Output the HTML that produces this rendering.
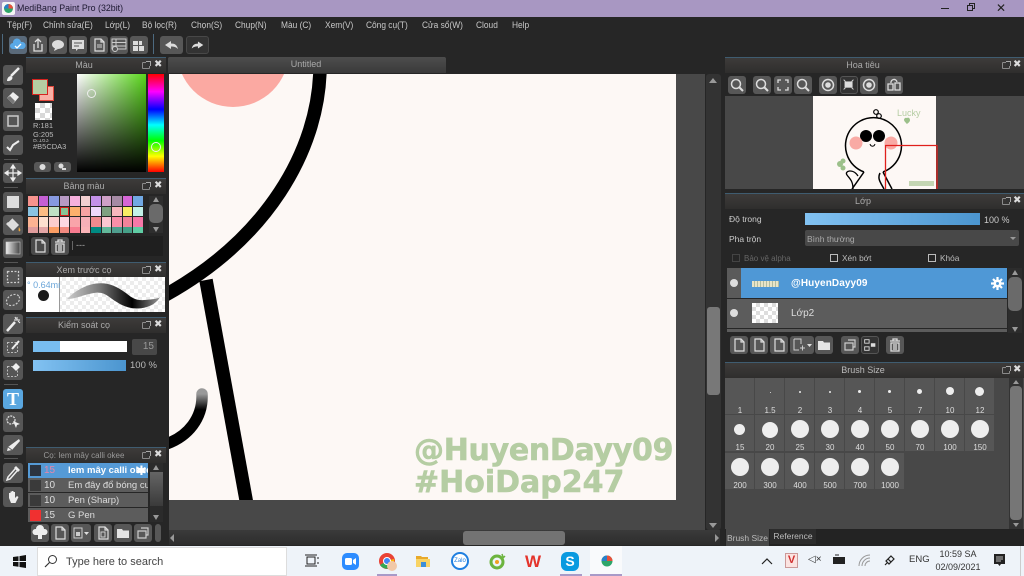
<!DOCTYPE html>
<html><head><meta charset="utf-8"><style>
*{box-sizing:border-box}
html,body{margin:0;padding:0;width:1024px;height:576px;overflow:hidden;background:#262626}
body{position:relative;font-family:"Liberation Sans","DejaVu Sans",sans-serif;font-size:9px;color:#ccc}
div,span,svg{position:absolute}
.t{white-space:nowrap;line-height:12px}
.m{top:18px;font-size:9.5px;color:#c8c8c8;white-space:nowrap;line-height:15px;transform:scaleX(.88);transform-origin:0 0}
.b{background:#575757;border-radius:3px;width:18px;height:18px}
.tl{left:3px;width:20px;height:20px;background:#565656;border-radius:3px}
.b svg,.tl svg{left:0;top:0;width:100%;height:100%}
.h{background:linear-gradient(#3d3b3a,#2f2e2d);border-top:1px solid #3f5c70;height:16px;text-align:center;color:#aaa;font-size:9px;line-height:15px}
.hl{padding-right:24px}
.hr{padding-right:23px}
.pi{width:8px;height:7px;border:1px solid #8a8a8a;border-radius:1px}
.pi::after{content:"";position:absolute;right:-2px;top:-2px;width:4px;height:4px;background:#333;border-top:1px solid #aaa;border-right:1px solid #aaa}
.x{top:0;color:#ddd;font-size:10px;font-weight:bold;line-height:14px}
.sw{width:9.5px;height:9.5px}
.c{width:29px;background:#565656;height:36px}
.d{background:#eee;border-radius:50%}
.n{width:30px;text-align:center;color:#ddd;font-size:8px;line-height:10px;white-space:nowrap}
.s{left:4px;width:14px;height:1px;background:#555}
.r{left:28px;width:120px;height:14px;background:#5c5c5c;color:#ddd;font-size:9.5px;line-height:14px;white-space:nowrap;overflow:hidden}
.wm{font-family:"DejaVu Sans",sans-serif;font-size:30px;line-height:38px;font-weight:bold;color:#b5cda3;-webkit-text-stroke:.6px #b5cda3}
</style></head><body>
<svg width="0" height="0" style="position:absolute"><defs>
<symbol id="page" viewBox="0 0 18 18"><path d="M5 3h6l3 3v9H5zM11 3v3h3" fill="none" stroke="#ddd" stroke-width="1.2"/></symbol>
<symbol id="trash" viewBox="0 0 18 18"><path d="M4 5h10M7 5V3h4v2M5 7h8v8H5zM8 8v6M10 8v6" fill="none" stroke="#ddd" stroke-width="1.3"/></symbol>
<symbol id="copy" viewBox="0 0 18 18"><path d="M7 4h7v7h-2M4 7h8v7H4z" fill="none" stroke="#ccc" stroke-width="1.2"/></symbol>
<symbol id="folder" viewBox="0 0 18 18"><path d="M3 5h5l1 1.500h6V14H3z" fill="#e4e4e4"/></symbol>
<symbol id="mag" viewBox="0 0 18 18"><circle cx="8" cy="8" r="4.500" fill="none" stroke="#ddd" stroke-width="1.500"/><path d="M11 11l4 4" stroke="#ddd" stroke-width="2"/></symbol>
<symbol id="rot" viewBox="0 0 18 18"><circle cx="9" cy="9" r="5.500" fill="none" stroke="#ddd" stroke-width="1.500"/><circle cx="9" cy="9" r="2.800" fill="#ddd"/></symbol>
</defs></svg>

<!-- title bar -->
<div style="left:0;top:0;width:1024px;height:17px;background:#a897c2"></div>
<svg style="left:2px;top:2px" width="13" height="13" viewBox="0 0 13 13"><rect width="13" height="13" rx="2" fill="#f5f5f5"/><circle cx="6.500" cy="6.500" r="4.500" fill="#2fa56a"/><path d="M6.500 2a4.500 4.500 0 0 1 4.500 4.500H6.500z" fill="#e8503a"/><path d="M2 6.500a4.500 4.500 0 0 1 4.500-4.500v4.500z" fill="#2a7fc8"/></svg>
<div class="t" style="left:17px;top:2px;font-size:9.5px;color:#1c1830;line-height:13px;transform:scaleX(.93);transform-origin:0 0">MediBang Paint Pro (32bit)</div>
<div style="left:941px;top:8px;width:8px;height:1px;background:#222"></div>
<div style="left:969px;top:3px;width:6px;height:6px;border:1px solid #222"></div>
<div style="left:967px;top:5px;width:6px;height:6px;border:1px solid #222;background:#a897c2"></div>
<div class="t" style="left:996px;top:2px;font-size:12px;color:#222">✕</div>

<!-- menu -->
<div class="m" style="left:7px">Tệp(F)</div>
<div class="m" style="left:43px">Chỉnh sửa(E)</div>
<div class="m" style="left:105px">Lớp(L)</div>
<div class="m" style="left:142px">Bộ lọc(R)</div>
<div class="m" style="left:191px">Chọn(S)</div>
<div class="m" style="left:235px">Chụp(N)</div>
<div class="m" style="left:281px">Màu (C)</div>
<div class="m" style="left:325px">Xem(V)</div>
<div class="m" style="left:366px">Công cụ(T)</div>
<div class="m" style="left:422px">Cửa sổ(W)</div>
<div class="m" style="left:476px">Cloud</div>
<div class="m" style="left:512px">Help</div>

<!-- toolbar -->
<div style="left:2px;top:34px;width:1px;height:20px;background:#4d6a80"></div>
<div class="b" style="left:9px;top:36px;background:#5a6a7a"><svg viewBox="0 0 18 18"><path d="M4 13a3 3 0 0 1 0-6 4 4 0 0 1 8-1 3.500 3.500 0 0 1 2 7z" fill="#5aa9e6"/><path d="M6 10l2 2 4-4" stroke="#fff" stroke-width="1.300" fill="none"/></svg></div>
<div class="b" style="left:29px;top:36px"><svg viewBox="0 0 18 18"><path d="M5 8v7h8V8M9 12V3M6 6l3-3 3 3" fill="none" stroke="#ddd" stroke-width="1.300"/></svg></div>
<div class="b" style="left:49px;top:36px"><svg viewBox="0 0 18 18"><ellipse cx="9" cy="8.500" rx="6" ry="4.500" fill="#ddd"/><path d="M6 12l-1 3 4-2z" fill="#ddd"/></svg></div>
<div class="b" style="left:69px;top:36px"><svg viewBox="0 0 18 18"><path d="M3 4h12v9H9l-2 2v-2H3z" fill="#ddd"/><path d="M5 7h8M5 10h5" stroke="#555"/></svg></div>
<div class="b" style="left:90px;top:36px"><svg><use href="#page"/></svg><svg viewBox="0 0 18 18"><path d="M7 9h5M7 11h5" stroke="#ccc"/></svg></div>
<div class="b" style="left:110px;top:36px"><svg viewBox="0 0 18 18"><path d="M2 3h14v10H2zM2 6.500h14M2 10h14M6 3v10" fill="none" stroke="#ccc"/><circle cx="5" cy="13" r="2.500" fill="#555" stroke="#ccc"/></svg></div>
<div class="b" style="left:130px;top:36px"><svg viewBox="0 0 18 18"><path d="M3 5h5v4H3zM9 5h3v4H9zM3 10h5v5H3zM9 10h5v5H9z" fill="#ddd"/></svg></div>
<div style="left:153px;top:34px;width:1px;height:20px;background:#4d6a80"></div>
<div class="b" style="left:160px;top:36px;width:23px"><svg viewBox="0 0 23 18"><path d="M11 5L5 9l6 4v-2.500c3 0 5 .5 7 2.500-1-4-3-5.500-7-5.500z" fill="#ddd"/></svg></div>
<div class="b" style="left:186px;top:36px;width:23px;background:#333;border:1px solid #484848"><svg viewBox="0 0 23 18"><path d="M12 5l6 4-6 4v-2.500c-3 0-5 .5-7 2.500 1-4 3-5.500 7-5.500z" fill="#ddd"/></svg></div>

<!-- left tools -->
<div class="tl" style="top:65px"><svg viewBox="0 0 20 20"><path d="M16 3L8 11" stroke="#eee" stroke-width="2.500"/><path d="M4 16c0-3 2-5 4-5l1.500 1.500c0 2-2 4-5.500 3.500z" fill="#eee"/></svg></div>
<div class="tl" style="top:88px"><svg viewBox="0 0 20 20"><path d="M10 4l6 5-6 7-6-6z" fill="#eee"/><path d="M7 8l5 5-2 3-6-6z" fill="#777"/></svg></div>
<div class="tl" style="top:111px"><svg viewBox="0 0 20 20"><rect x="5" y="5" width="10" height="10" fill="none" stroke="#ccc" stroke-width="1.500"/></svg></div>
<div class="tl" style="top:135px"><svg viewBox="0 0 20 20"><path d="M4 12l3 3 3-5 6-4" fill="none" stroke="#eee" stroke-width="2"/></svg></div>
<div class="s" style="top:159px"></div>
<div class="tl" style="top:163px"><svg viewBox="0 0 20 20"><path d="M10 3v14M3 10h14M10 2l-2 3h4zM10 18l-2-3h4zM2 10l3-2v4zM18 10l-3-2v4z" stroke="#eee" fill="#eee" stroke-width="1.200"/></svg></div>
<div class="s" style="top:187px"></div>
<div class="tl" style="top:192px"><svg viewBox="0 0 20 20"><rect x="4" y="4" width="12" height="12" fill="#ddd"/></svg></div>
<div class="tl" style="top:215px"><svg viewBox="0 0 20 20"><path d="M9 3l7 7-6 6-7-7z" fill="#ddd"/><path d="M5 7l4-4" stroke="#555"/><path d="M16 12c1 2 2 3 1 4s-2 0-1-4z" fill="#e9a33a"/></svg></div>
<div class="tl" style="top:238px"><svg viewBox="0 0 20 20"><defs><linearGradient id="g1"><stop offset="0" stop-color="#eee"/><stop offset="1" stop-color="#444"/></linearGradient></defs><rect x="3" y="4" width="14" height="12" fill="url(#g1)" stroke="#ccc" stroke-width=".6"/></svg></div>
<div class="s" style="top:262px"></div>
<div class="tl" style="top:267px"><svg viewBox="0 0 20 20"><rect x="4.500" y="4.500" width="11" height="11" fill="none" stroke="#ccc" stroke-width="1.300" stroke-dasharray="2 1.500"/></svg></div>
<div class="tl" style="top:290px"><svg viewBox="0 0 20 20"><ellipse cx="10" cy="10" rx="7" ry="5" transform="rotate(-30 10 10)" fill="none" stroke="#ccc" stroke-width="1.200" stroke-dasharray="2 1.500"/></svg></div>
<div class="tl" style="top:314px"><svg viewBox="0 0 20 20"><path d="M4 17L12 8" stroke="#eee" stroke-width="2.500"/><path d="M14 3v3M11 6h6M17 9l-2-2M12 3l1 2" stroke="#eee"/></svg></div>
<div class="tl" style="top:337px"><svg viewBox="0 0 20 20"><rect x="4.500" y="5.500" width="10" height="10" fill="none" stroke="#bbb" stroke-dasharray="2 1.500"/><path d="M9 12L16 4" stroke="#eee" stroke-width="2"/></svg></div>
<div class="tl" style="top:360px"><svg viewBox="0 0 20 20"><rect x="4.500" y="6.500" width="10" height="10" fill="none" stroke="#bbb" stroke-dasharray="2 1.500"/><path d="M9 7l4-4 4 4-4 4z" fill="#eee"/></svg></div>
<div class="s" style="top:384px"></div>
<div class="tl" style="top:389px;background:#5aa7e0;color:#fff;font:bold 18px/20px 'Liberation Serif',serif;text-align:center">T</div>
<div class="tl" style="top:412px"><svg viewBox="0 0 20 20"><circle cx="8" cy="8" r="4" fill="none" stroke="#ddd" stroke-width="1.300" stroke-dasharray="2 1"/><path d="M10 9l7 3-3 1-1 3z" fill="#eee"/></svg></div>
<div class="tl" style="top:435px"><svg viewBox="0 0 20 20"><path d="M16 4l1 2-8 9-5 1 1-4z" fill="#eee"/><path d="M5 12l4 3" stroke="#666"/></svg></div>
<div class="s" style="top:458px"></div>
<div class="tl" style="top:463px"><svg viewBox="0 0 20 20"><path d="M12 6L5 14l-1 3 3-1 7-8" fill="none" stroke="#eee" stroke-width="1.500"/><path d="M11 5l2-2 4 4-2 2z" fill="#eee"/></svg></div>
<div class="tl" style="top:487px"><svg viewBox="0 0 20 20"><path d="M6 11V6h1.500v4V4.500H9V10V4h1.500v6V5H12v6l2-2 1.500 1-3 6H8z" fill="#eee"/></svg></div>

<!-- color panel -->
<div class="h hl" style="left:26px;top:57px;width:140px">Màu</div>
<div class="pi" style="left:142px;top:62px"></div><div class="x" style="left:154px;top:58px">✖</div>
<div style="left:39px;top:86px;width:15px;height:15px;background:#f9b0a5;border:1px solid #e2483c"></div>
<div style="left:32px;top:79px;width:16px;height:16px;background:#b5cda3;border:1.500px solid #d62420"></div>
<div style="left:35px;top:103px;width:17px;height:17px;background:repeating-conic-gradient(#d8d8d8 0 25%,#fff 0 50%) 0 0/10px 10px"></div>
<div class="t" style="left:33px;top:121px;font-size:7.500px;line-height:9px;color:#bbb">R:181<br>G:205</div>
<div class="t" style="left:33px;top:139px;font-size:6px;line-height:5px;color:#aaa;height:4px;overflow:hidden">B:163</div>
<div class="t" style="left:33px;top:142px;font-size:7.500px;line-height:9px;color:#bbb">#B5CDA3</div>
<div class="b" style="left:34px;top:162px;width:17px;height:10px"><svg viewBox="0 0 17 10"><circle cx="8.500" cy="5" r="3" fill="#ddd"/></svg></div>
<div class="b" style="left:54px;top:162px;width:17px;height:10px"><svg viewBox="0 0 17 10"><circle cx="7" cy="4" r="2.500" fill="#ddd"/><path d="M8 6h4v2H8z" fill="#ddd"/></svg></div>
<div style="left:77px;top:74px;width:69px;height:98px;background:linear-gradient(transparent,#000),linear-gradient(90deg,#fff,#59d61b)"></div>
<div style="left:87px;top:89px;width:9px;height:9px;border:1.200px solid #eee;border-radius:50%"></div>
<div style="left:148px;top:74px;width:16px;height:98px;background:linear-gradient(#f00 0%,#f0f 18%,#00f 36%,#0ff 52%,#0f0 68%,#ff0 84%,#f00 100%)"></div>
<div style="left:151px;top:142px;width:10px;height:10px;border:1.300px solid #eee;border-radius:50%"></div>

<!-- palette panel -->
<div class="h hl" style="left:26px;top:178px;width:140px">Bảng màu</div>
<div class="pi" style="left:142px;top:183px"></div><div class="x" style="left:154px;top:179px">✖</div>
<div class="sw" style="left:28px;top:196px;background:#f7938d"></div><div class="sw" style="left:38.500px;top:196px;background:#c45fd3"></div><div class="sw" style="left:49px;top:196px;background:#8799e0"></div><div class="sw" style="left:59.500px;top:196px;background:#b89ac4"></div><div class="sw" style="left:70px;top:196px;background:#f6b0dc"></div><div class="sw" style="left:80.500px;top:196px;background:#f2cfd0"></div><div class="sw" style="left:91px;top:196px;background:#c391e8"></div><div class="sw" style="left:101.500px;top:196px;background:#cfa0c6"></div><div class="sw" style="left:112px;top:196px;background:#a58aa4"></div><div class="sw" style="left:122.500px;top:196px;background:#d666d6"></div><div class="sw" style="left:133px;top:196px;background:#71a9e4"></div>
<div class="sw" style="left:28px;top:206.500px;background:#89c4e2"></div><div class="sw" style="left:38.500px;top:206.500px;background:#fbbd84"></div><div class="sw" style="left:49px;top:206.500px;background:#bfe0c4"></div><div class="sw" style="left:59.500px;top:206.500px;background:#88c596;border:1px solid #d8201c"></div><div class="sw" style="left:70px;top:206.500px;background:#fdb06c"></div><div class="sw" style="left:80.500px;top:206.500px;background:#f7a3a3"></div><div class="sw" style="left:91px;top:206.500px;background:#eed8fa"></div><div class="sw" style="left:101.500px;top:206.500px;background:#7fa181"></div><div class="sw" style="left:112px;top:206.500px;background:#f7b7bd"></div><div class="sw" style="left:122.500px;top:206.500px;background:#f9ee64"></div><div class="sw" style="left:133px;top:206.500px;background:#c2f2e8"></div>
<div class="sw" style="left:28px;top:217px;background:#fcb392"></div><div class="sw" style="left:38.500px;top:217px;background:#fde0cf"></div><div class="sw" style="left:49px;top:217px;background:#fbcdcd"></div><div class="sw" style="left:59.500px;top:217px;background:#fcd8e2"></div><div class="sw" style="left:70px;top:217px;background:#f9a4aa"></div><div class="sw" style="left:80.500px;top:217px;background:#f7b0b8"></div><div class="sw" style="left:91px;top:217px;background:#ee8a8e"></div><div class="sw" style="left:101.500px;top:217px;background:#fbc6d0"></div><div class="sw" style="left:112px;top:217px;background:#f98ea8"></div><div class="sw" style="left:122.500px;top:217px;background:#f4829a"></div><div class="sw" style="left:133px;top:217px;background:#f678a8"></div>
<div class="sw" style="left:28px;top:227px;height:6px;background:#e09c9c"></div><div class="sw" style="left:38.500px;top:227px;height:6px;background:#e4a6a6"></div><div class="sw" style="left:49px;top:227px;height:6px;background:#fb9e64"></div><div class="sw" style="left:59.500px;top:227px;height:6px;background:#f28a80"></div><div class="sw" style="left:70px;top:227px;height:6px;background:#f87c90"></div><div class="sw" style="left:80.500px;top:227px;height:6px;background:#fbb4b8"></div><div class="sw" style="left:91px;top:227px;height:6px;background:#008a82"></div><div class="sw" style="left:101.500px;top:227px;height:6px;background:#62b89a"></div><div class="sw" style="left:112px;top:227px;height:6px;background:#4f9e8e"></div><div class="sw" style="left:122.500px;top:227px;height:6px;background:#46a088"></div><div class="sw" style="left:133px;top:227px;height:6px;background:#5fcca4"></div>
<div style="left:149px;top:196px;width:14px;height:37px;background:#2e2e2e"></div>
<div style="left:149px;top:204px;width:14px;height:19px;background:#6a6a6a;border-radius:5px"></div>
<div style="left:153px;top:197px;border:3.500px solid transparent;border-bottom:5px solid #999;border-top:0"></div>
<div style="left:153px;top:227px;border:3.500px solid transparent;border-top:5px solid #999;border-bottom:0"></div>
<div style="left:29px;top:236px;width:134px;height:20px;background:#1f1f1f"></div>
<div class="b" style="left:31px;top:237px;background:#4a4a4a"><svg><use href="#page"/></svg></div>
<div class="b" style="left:51px;top:237px;background:#4f4f4f"><svg><use href="#trash"/></svg></div>
<div style="left:72px;top:241px;width:1px;height:9px;background:#666"></div>
<div class="t" style="left:76px;top:239px;font-size:9px;color:#aaa">---</div>

<!-- brush preview -->
<div class="h hl" style="left:26px;top:262px;width:140px">Xem trước cọ</div>
<div class="pi" style="left:142px;top:267px"></div><div class="x" style="left:154px;top:263px">✖</div>
<div style="left:26px;top:277px;width:139px;height:35px;background:repeating-conic-gradient(#ececec 0 25%,#fff 0 50%) 0 0/8px 8px"></div>
<div style="left:26px;top:277px;width:34px;height:35px;background:#fff;border-right:1px solid #999"></div>
<div class="t" style="left:27px;top:279px;width:33px;overflow:hidden;font-size:9px;color:#6aa5d8">° 0.64mm</div>
<div style="left:38px;top:290px;width:11px;height:11px;background:#1a1a1a;border-radius:50%"></div>
<svg style="left:60px;top:277px" width="105" height="35" viewBox="0 0 105 35"><defs><linearGradient id="g2"><stop offset="0" stop-color="#ccc"/><stop offset=".35" stop-color="#777"/><stop offset=".7" stop-color="#000"/><stop offset="1" stop-color="#999"/></linearGradient></defs><path d="M7 22C20 9 38 2 54 9S70 24 84 23 98 21 100 20C94 31 76 35 62 28S46 14 34 16 16 22 7 22z" fill="url(#g2)"/></svg>

<!-- brush control -->
<div class="h hl" style="left:26px;top:317px;width:140px">Kiểm soát cọ</div>
<div class="pi" style="left:142px;top:322px"></div><div class="x" style="left:154px;top:318px">✖</div>
<div style="left:33px;top:341px;width:94px;height:11px;background:#fff"></div>
<div style="left:33px;top:341px;width:27px;height:11px;background:#78bdf0"></div>
<div style="left:132px;top:339px;width:25px;height:16px;background:#484848;border-radius:2px;color:#999;font-size:10px;line-height:16px;text-align:right;padding-right:3px">15</div>
<div style="left:33px;top:360px;width:93px;height:11px;background:linear-gradient(90deg,#82c2f2,#4b95cf)"></div>
<div class="t" style="left:130px;top:360px;color:#bbb;font-size:9.500px">100 %</div>

<!-- brush list -->
<div class="h hl" style="left:26px;top:447px;width:140px;color:#999;font-size:8px">Cọ: Iem mây calli okee</div>
<div class="pi" style="left:142px;top:452px"></div><div class="x" style="left:154px;top:448px">✖</div>
<div class="r" style="top:463px;height:15px;background:#559ad6;color:#fff;font-weight:bold"></div>
<div class="r" style="top:478px"></div><div class="r" style="top:493px"></div><div class="r" style="top:508px"></div>
<div style="left:30px;top:465px;width:11px;height:11px;background:#2c3440"></div>
<div style="left:30px;top:480px;width:11px;height:11px;background:#3a3a3a"></div>
<div style="left:30px;top:495px;width:11px;height:11px;background:#3a3a3a"></div>
<div style="left:30px;top:510px;width:11px;height:11px;background:#f03030"></div>
<div class="t" style="left:44px;top:465px;font-size:10px;color:#e886a8">15</div>
<div class="t" style="left:44px;top:480px;font-size:10px;color:#ddd">10</div>
<div class="t" style="left:44px;top:495px;font-size:10px;color:#ddd">10</div>
<div class="t" style="left:44px;top:510px;font-size:10px;color:#ddd">15</div>
<div class="t" style="left:68px;top:465px;width:80px;overflow:hidden;font-size:9.500px;font-weight:bold;color:#fff">Iem mây calli okee</div>
<div class="t" style="left:68px;top:480px;width:80px;overflow:hidden;font-size:9.500px;color:#ddd">Em đây đổ bóng cute</div>
<div class="t" style="left:68px;top:495px;font-size:9.500px;color:#ddd">Pen (Sharp)</div>
<div class="t" style="left:68px;top:510px;font-size:9.500px;color:#ddd">G Pen</div>
<div style="left:136px;top:464px;width:12px;height:13px;color:#fff;font-size:13px;line-height:13px">✱</div>
<div style="left:150px;top:463px;width:13px;height:59px;background:#2b2b2b"></div>
<div style="left:150px;top:472px;width:13px;height:34px;background:linear-gradient(#656565,#3a3a3a)"></div>
<div style="left:153px;top:465px;border:3.500px solid transparent;border-bottom:5px solid #999;border-top:0"></div>
<div style="left:153px;top:515px;border:3.500px solid transparent;border-top:5px solid #999;border-bottom:0"></div>
<div class="b" style="left:31px;top:524px"><svg viewBox="0 0 18 18"><path d="M4 11a3 3 0 0 1 1-6 4 4 0 0 1 8 0 3 3 0 0 1 1 6h-3v4H7v-4z" fill="#eee"/></svg></div>
<div class="b" style="left:51px;top:524px"><svg><use href="#page"/></svg></div>
<div class="b" style="left:71px;top:524px;width:20px"><svg viewBox="0 0 20 18"><path d="M3 4h8v10H3z" fill="none" stroke="#ccc"/><path d="M5 8h4v4H5z" fill="#ccc"/><path d="M13 8h5l-2.500 3z" fill="#ddd"/></svg></div>
<div class="b" style="left:94px;top:524px"><svg><use href="#page"/></svg><svg viewBox="0 0 18 18"><rect x="7" y="8" width="4" height="5" fill="none" stroke="#ccc"/></svg></div>
<div class="b" style="left:114px;top:524px"><svg><use href="#folder"/></svg></div>
<div class="b" style="left:134px;top:524px"><svg><use href="#copy"/></svg></div>
<div class="b" style="left:155px;top:524px;width:6px"></div>

<!-- canvas -->
<div style="left:168px;top:55px;width:552px;height:19px;background:#262626"></div>
<div style="left:168px;top:57px;width:278px;height:16px;background:linear-gradient(#4d4d4d,#3a3a3a);border-radius:2px 2px 0 0;color:#aaa;font-size:9px;line-height:15px;text-align:center;padding-right:2px">Untitled</div>
<div style="left:169px;top:74px;width:536px;height:456px;background:#484848"></div>
<div style="left:169px;top:74px;width:507px;height:426px;background:#fdf8f5;overflow:hidden">
<svg style="left:0;top:0" width="507" height="426" viewBox="169 74 507 426">
<defs><linearGradient id="g3" x1="0" y1="1" x2="0" y2="0"><stop offset=".7" stop-color="#000"/><stop offset="1" stop-color="#999"/></linearGradient></defs>
<circle cx="233" cy="51" r="56" fill="#fba9a2"/>
<path d="M320 70C318 150 268 240 160 298" fill="none" stroke="#000" stroke-width="13.500"/>
<path d="M206 280L247 505" fill="none" stroke="#000" stroke-width="13.500"/>
<path d="M202 394C203 416 190 438 160 446" fill="none" stroke="url(#g3)" stroke-width="11.500" stroke-linecap="round"/>
</svg>
<div class="t wm" style="left:245px;top:358px;letter-spacing:-.3px">@HuyenDayy09</div>
<div class="t wm" style="left:245px;top:390px">#HoiDap247</div>
</div>
<div style="left:706px;top:74px;width:15px;height:456px;background:#333;border-radius:3px"></div>
<div style="left:707px;top:307px;width:13px;height:88px;background:#787878;border-radius:3px"></div>
<div style="left:709px;top:78px;border:4px solid transparent;border-bottom:5px solid #999;border-top:0"></div>
<div style="left:709px;top:523px;border:4px solid transparent;border-top:5px solid #999;border-bottom:0"></div>
<div style="left:169px;top:530px;width:551px;height:15px;background:linear-gradient(#3a3a3a,#2d2d2d)"></div>
<div style="left:463px;top:531px;width:102px;height:14px;background:#737373;border-radius:3px"></div>
<div style="left:170px;top:534px;border:4px solid transparent;border-right:4px solid #999;border-left:0"></div>
<div style="left:715px;top:534px;border:4px solid transparent;border-left:4px solid #999;border-right:0"></div>

<!-- navigator -->
<div class="h hr" style="left:725px;top:57px;width:299px">Hoa tiêu</div>
<div class="pi" style="left:1002px;top:62px"></div><div class="x" style="left:1013px;top:58px">✖</div>
<div style="left:725px;top:73px;width:299px;height:23px;background:#262626"></div>
<div class="b" style="left:728px;top:76px"><svg><use href="#mag"/></svg></div>
<div class="b" style="left:753px;top:76px"><svg><use href="#mag"/></svg></div>
<div class="b" style="left:774px;top:76px"><svg viewBox="0 0 18 18"><path d="M4 7V4h3M11 4h3v3M14 11v3h-3M7 14H4v-3" fill="none" stroke="#ddd" stroke-width="1.300"/></svg></div>
<div class="b" style="left:794px;top:76px"><svg><use href="#mag"/></svg></div>
<div class="b" style="left:819px;top:76px"><svg><use href="#rot"/></svg></div>
<div class="b" style="left:840px;top:76px;background:#333;border:1px solid #555"><svg viewBox="0 0 18 18"><rect x="4" y="5" width="9" height="7" fill="#ddd"/><path d="M3 3l2 2M14 3l-2 2M3 14l2-2M14 14l-2-2" stroke="#ddd"/></svg></div>
<div class="b" style="left:860px;top:76px"><svg><use href="#rot"/></svg></div>
<div class="b" style="left:885px;top:76px"><svg viewBox="0 0 18 18"><path d="M3 8h5v6H3zM10 7h5v7h-5zM6 7a3 3 0 0 1 6-1" fill="none" stroke="#ddd" stroke-width="1.300"/></svg></div>
<div style="left:725px;top:96px;width:299px;height:93px;background:#484848"></div>
<div style="left:813px;top:96px;width:123px;height:93px;background:#fdf8f5"></div>
<svg style="left:813px;top:96px" width="125" height="93" viewBox="813 96 125 93">
<circle cx="876" cy="112" r="2.300" fill="none" stroke="#000" stroke-width="1.200"/><circle cx="879" cy="116" r="2.300" fill="none" stroke="#000" stroke-width="1.200"/>
<path d="M864 172A28 28 0 1 1 883 172" fill="none" stroke="#000" stroke-width="1.500"/>
<path d="M864 172L852 189M883 172L892 189M880 173C877 179 881 183 884 189" fill="none" stroke="#000" stroke-width="1.500"/>
<path d="M858 176C853 168 844 171 847 175S853 181 853 189" fill="none" stroke="#000" stroke-width="1.300"/>
<circle cx="866" cy="136" r="6" fill="#000"/><circle cx="879" cy="136" r="6" fill="#000"/>
<circle cx="856" cy="143" r="6.500" fill="#f9aaa4"/><circle cx="891" cy="143" r="6.500" fill="#f9aaa4"/>
<path d="M870 144c1 3 4 3 5 0" fill="none" stroke="#000"/>
<circle cx="840" cy="164" r="3" fill="#9cc08a"/><circle cx="843" cy="161" r="2.500" fill="#9cc08a"/><circle cx="843" cy="168" r="2.500" fill="#9cc08a"/>
<text x="897" y="116" font-size="9" font-family="Liberation Sans" fill="#b5cda3">Lucky</text>
<path d="M907 118c-2-1-3 1-3 2s2 3 3 4c1-1 3-2 3-4s-2-3-3-2z" fill="#9cc08a"/>
<rect x="909" y="181" width="25" height="5" fill="#b5cda3" opacity=".8"/>
<path d="M885.500 189V145.500H937V189" fill="none" stroke="#e0201c" stroke-width="1.300"/>
</svg>

<!-- layer panel -->
<div style="left:725px;top:189px;width:299px;height:5px;background:#262626"></div>
<div class="h hr" style="left:725px;top:193px;width:299px">Lớp</div>
<div class="pi" style="left:1002px;top:198px"></div><div class="x" style="left:1013px;top:194px">✖</div>
<div style="left:725px;top:209px;width:299px;height:152px;background:#262626"></div>
<div class="t" style="left:729px;top:213px;font-size:8.500px;color:#ccc">Độ trong</div>
<div style="left:805px;top:213px;width:175px;height:12px;background:linear-gradient(90deg,#82c2f2,#4b95cf)"></div>
<div class="t" style="left:984px;top:214px;font-size:9px;color:#ccc">100 %</div>
<div class="t" style="left:729px;top:233px;font-size:8.500px;color:#ccc">Pha trộn</div>
<div style="left:805px;top:230px;width:214px;height:16px;background:#484848;border-radius:2px;color:#aaa;font-size:8.500px;line-height:18px;padding-left:2px">Bình thường</div>
<div style="left:1010px;top:237px;border:3px solid transparent;border-top:3px solid #999;border-bottom:0"></div>
<div style="left:732px;top:254px;width:8px;height:8px;border:1px solid #444"></div>
<div class="t" style="left:744px;top:253px;font-size:8px;color:#666">Bảo vệ alpha</div>
<div style="left:830px;top:254px;width:8px;height:8px;border:1px solid #bbb"></div>
<div class="t" style="left:842px;top:252px;font-size:8.300px;color:#bbb">Xén bớt</div>
<div style="left:928px;top:254px;width:8px;height:8px;border:1px solid #bbb"></div>
<div class="t" style="left:940px;top:252px;font-size:8.300px;color:#bbb">Khóa</div>
<div style="left:727px;top:268px;width:280px;height:30px;background:#4f98d6"></div>
<div style="left:727px;top:268px;width:14px;height:30px;background:#5a5a5a"></div>
<div style="left:727px;top:299px;width:280px;height:29px;background:#5c5c5c"></div>
<div style="left:727px;top:329px;width:280px;height:3px;background:#5c5c5c"></div>
<div style="left:730px;top:279px;width:8px;height:8px;background:#ddd;border-radius:50%"></div>
<div style="left:730px;top:309px;width:8px;height:8px;background:#ddd;border-radius:50%"></div>
<div style="left:752px;top:281px;width:27px;height:6px;background:repeating-linear-gradient(90deg,#e8e4c8 0 2px,#b0bca0 2px 3px)"></div>
<div style="left:752px;top:303px;width:26px;height:20px;background:repeating-conic-gradient(#ddd 0 25%,#fff 0 50%) 0 0/8px 8px"></div>
<div class="t" style="left:791px;top:277px;font-size:10px;font-weight:bold;color:#fff;letter-spacing:.1px;line-height:14px">@HuyenDayy09</div>
<div class="t" style="left:791px;top:307px;font-size:10px;color:#ddd;line-height:14px">Lớp2</div>
<svg style="left:990px;top:276px" width="15" height="15" viewBox="0 0 15 15"><path d="M7.500 1v13M1 7.500h13M3 3l9 9M12 3l-9 9" stroke="#fff" stroke-width="2.200"/><circle cx="7.500" cy="7.500" r="4" fill="#fff"/><circle cx="7.500" cy="7.500" r="1.500" fill="#4f98d6"/></svg>
<div style="left:1008px;top:268px;width:14px;height:65px;background:#2c2c2c"></div>
<div style="left:1008px;top:277px;width:14px;height:34px;background:#6a6a6a;border-radius:5px"></div>
<div style="left:1012px;top:270px;border:3px solid transparent;border-bottom:5px solid #999;border-top:0"></div>
<div style="left:1012px;top:327px;border:3px solid transparent;border-top:5px solid #999;border-bottom:0"></div>
<div class="b" style="left:730px;top:336px"><svg><use href="#page"/></svg></div>
<div class="b" style="left:750px;top:336px"><svg><use href="#page"/></svg></div>
<div class="b" style="left:770px;top:336px"><svg><use href="#page"/></svg></div>
<div class="b" style="left:790px;top:336px;width:24px"><svg viewBox="0 0 24 18"><path d="M4 3h7v5M4 3v11h5M10 12h5M12.500 9.500v5" fill="none" stroke="#ccc"/><path d="M17 8h5l-2.500 3z" fill="#ddd"/></svg></div>
<div class="b" style="left:815px;top:336px"><svg><use href="#folder"/></svg></div>
<div class="b" style="left:841px;top:336px"><svg><use href="#copy"/></svg></div>
<div class="b" style="left:861px;top:336px;background:#333;border:1px solid #555"><svg viewBox="0 0 18 18"><path d="M3 3h5v4H3zM3 11h5v4H3z" fill="none" stroke="#ddd"/><rect x="10" y="7" width="5" height="4" fill="#ddd"/></svg></div>
<div class="b" style="left:886px;top:336px"><svg><use href="#trash"/></svg></div>

<!-- brush size -->
<div class="h hr" style="left:725px;top:362px;width:299px;color:#bbb">Brush Size</div>
<div class="pi" style="left:1002px;top:367px"></div><div class="x" style="left:1013px;top:363px">✖</div>
<div style="left:725px;top:378px;width:299px;height:151px;background:#484848"></div>

<div class="c" style="left:725px;top:378px"></div><div class="c" style="left:755px;top:378px"></div><div class="c" style="left:785px;top:378px"></div><div class="c" style="left:815px;top:378px"></div><div class="c" style="left:845px;top:378px"></div><div class="c" style="left:875px;top:378px"></div><div class="c" style="left:905px;top:378px"></div><div class="c" style="left:935px;top:378px"></div><div class="c" style="left:965px;top:378px"></div>
<div class="c" style="left:725px;top:415px"></div><div class="c" style="left:755px;top:415px"></div><div class="c" style="left:785px;top:415px"></div><div class="c" style="left:815px;top:415px"></div><div class="c" style="left:845px;top:415px"></div><div class="c" style="left:875px;top:415px"></div><div class="c" style="left:905px;top:415px"></div><div class="c" style="left:935px;top:415px"></div><div class="c" style="left:965px;top:415px"></div>
<div class="c" style="left:725px;top:453px"></div><div class="c" style="left:755px;top:453px"></div><div class="c" style="left:785px;top:453px"></div><div class="c" style="left:815px;top:453px"></div><div class="c" style="left:845px;top:453px"></div><div class="c" style="left:875px;top:453px"></div>

<div class="d" style="left:770px;top:392px;width:1px;height:1px"></div>
<div class="d" style="left:799px;top:391px;width:2px;height:2px"></div>
<div class="d" style="left:829px;top:391px;width:2px;height:2px"></div>
<div class="d" style="left:858px;top:390px;width:3px;height:3px"></div>
<div class="d" style="left:888px;top:390px;width:3px;height:3px"></div>
<div class="d" style="left:917px;top:389px;width:5px;height:5px"></div>
<div class="d" style="left:946px;top:387px;width:8px;height:8px"></div>
<div class="d" style="left:975px;top:387px;width:9px;height:9px"></div>
<div class="d" style="left:734px;top:424px;width:11px;height:11px"></div>
<div class="d" style="left:762px;top:422px;width:16px;height:16px"></div>
<div class="d" style="left:791px;top:420px;width:18px;height:18px"></div>
<div class="d" style="left:821px;top:420px;width:18px;height:18px"></div>
<div class="d" style="left:851px;top:420px;width:18px;height:18px"></div>
<div class="d" style="left:881px;top:420px;width:18px;height:18px"></div>
<div class="d" style="left:911px;top:420px;width:18px;height:18px"></div>
<div class="d" style="left:941px;top:420px;width:18px;height:18px"></div>
<div class="d" style="left:971px;top:420px;width:18px;height:18px"></div>
<div class="d" style="left:731px;top:458px;width:18px;height:18px"></div>
<div class="d" style="left:761px;top:458px;width:18px;height:18px"></div>
<div class="d" style="left:791px;top:458px;width:18px;height:18px"></div>
<div class="d" style="left:821px;top:458px;width:18px;height:18px"></div>
<div class="d" style="left:851px;top:458px;width:18px;height:18px"></div>
<div class="d" style="left:881px;top:458px;width:18px;height:18px"></div>

<div class="n" style="left:725px;top:406px">1</div><div class="n" style="left:755px;top:406px">1.5</div><div class="n" style="left:785px;top:406px">2</div><div class="n" style="left:815px;top:406px">3</div><div class="n" style="left:845px;top:406px">4</div><div class="n" style="left:875px;top:406px">5</div><div class="n" style="left:905px;top:406px">7</div><div class="n" style="left:935px;top:406px">10</div><div class="n" style="left:965px;top:406px">12</div>
<div class="n" style="left:725px;top:443px">15</div><div class="n" style="left:755px;top:443px">20</div><div class="n" style="left:785px;top:443px">25</div><div class="n" style="left:815px;top:443px">30</div><div class="n" style="left:845px;top:443px">40</div><div class="n" style="left:875px;top:443px">50</div><div class="n" style="left:905px;top:443px">70</div><div class="n" style="left:935px;top:443px">100</div><div class="n" style="left:965px;top:443px">150</div>
<div class="n" style="left:725px;top:481px">200</div><div class="n" style="left:755px;top:481px">300</div><div class="n" style="left:785px;top:481px">400</div><div class="n" style="left:815px;top:481px">500</div><div class="n" style="left:845px;top:481px">700</div><div class="n" style="left:875px;top:481px">1000</div>

<div style="left:1009px;top:378px;width:14px;height:151px;background:#333"></div>
<div style="left:1010px;top:386px;width:12px;height:134px;background:#767676;border-radius:4px"></div>
<div style="left:1013px;top:380px;border:3px solid transparent;border-bottom:4px solid #999;border-top:0"></div>
<div style="left:1013px;top:523px;border:3px solid transparent;border-top:4px solid #999;border-bottom:0"></div>
<div style="left:725px;top:529px;width:299px;height:17px;background:#232323"></div>
<div style="left:726px;top:529px;width:43px;height:17px;background:#484848;color:#bbb;font-size:8.500px;line-height:19px;text-align:center;white-space:nowrap">Brush Size</div>
<div style="left:770px;top:529px;width:46px;height:15px;background:#2c2c2c;color:#bbb;font-size:8.500px;line-height:15px;text-align:center;white-space:nowrap">Reference</div>

<!-- taskbar -->
<div style="left:0;top:546px;width:1024px;height:30px;background:#eef3f9"></div>
<svg style="left:13px;top:555px" width="13" height="13" viewBox="0 0 13 13"><path d="M0 2l5.500-.8V6H0zM6.500 1.100L13 0v6H6.500zM0 7h5.500v4.800L0 11zM6.500 7H13v6l-6.500-1z" fill="#111"/></svg>
<div style="left:37px;top:547px;width:250px;height:29px;background:#fff;border:1px solid #ddd"></div>
<svg style="left:44px;top:554px" width="14" height="14" viewBox="0 0 14 14"><circle cx="8.500" cy="5.500" r="4" fill="none" stroke="#333"/><path d="M5.500 8.500L1 13" stroke="#333" stroke-width="1.200"/></svg>
<div class="t" style="left:66px;top:555px;font-size:11px;line-height:14px;color:#444">Type here to search</div>
<svg style="left:304px;top:553px" width="16" height="16" viewBox="0 0 16 16"><rect x="3" y="4" width="8" height="7" fill="none" stroke="#222"/><path d="M1 2h12M1 13h12M14 4v2M14 9v2" stroke="#222"/></svg>
<div style="left:342px;top:553px;width:17px;height:17px;background:#2d8cff;border-radius:5px"></div>
<svg style="left:345px;top:557px" width="11" height="9" viewBox="0 0 11 9"><rect y="1" width="7" height="7" rx="1.500" fill="#fff"/><path d="M8 3l3-2v7L8 6z" fill="#fff"/></svg>
<svg style="left:378px;top:552px" width="20" height="20" viewBox="0 0 20 20"><circle cx="9" cy="9" r="8" fill="#e94235"/><path d="M9 9L2 13a8 8 0 0 0 10 3z" fill="#34a853"/><path d="M9 9l3 7a8 8 0 0 0 4-9z" fill="#fbbc04"/><circle cx="9" cy="9" r="3.500" fill="#4285f4" stroke="#fff"/><circle cx="14" cy="14" r="5" fill="#f1c8a8"/></svg>
<div style="left:377px;top:574px;width:20px;height:2px;background:#a89ac8"></div>
<svg style="left:415px;top:553px" width="16" height="16" viewBox="0 0 16 16"><path d="M1 3h5l1 1h6v2H1z" fill="#e8a92a"/><path d="M1 6h14v8H1z" fill="#f8d364"/><rect x="6" y="9" width="5" height="5" fill="#3c8fd8"/></svg>
<div style="left:451px;top:552px;width:18px;height:18px;border-radius:50%;background:#fff;border:2px solid #1f7fe0;color:#1f7fe0;font-size:6px;line-height:14px;text-align:center">Zalo</div>
<svg style="left:489px;top:552px" width="18" height="18" viewBox="0 0 18 18"><circle cx="8" cy="10" r="6" fill="none" stroke="#6cb43f" stroke-width="3"/><circle cx="8" cy="10" r="2" fill="#f0a020"/><path d="M13 2l1 3M16 4l-2 2" stroke="#6cb43f" stroke-width="1.500"/></svg>
<div class="t" style="left:525px;top:552px;width:17px;font:bold 17px/19px 'Liberation Sans',sans-serif;color:#e4342c">W</div>
<div style="left:561px;top:552px;width:18px;height:19px;border-radius:6px;background:#0a9ae0;color:#fff;font:bold 14px/19px 'Liberation Sans',sans-serif;text-align:center">S</div>
<div style="left:560px;top:574px;width:22px;height:2px;background:#a89ac8"></div>
<div style="left:590px;top:546px;width:32px;height:30px;background:#f9fafc"></div>
<svg style="left:600px;top:554px" width="14" height="14" viewBox="0 0 14 14"><circle cx="7" cy="7" r="5.500" fill="#2fa56a"/><path d="M7 1.500A5.500 5.500 0 0 1 12.500 7H7z" fill="#e8503a"/><path d="M1.500 7A5.500 5.500 0 0 1 7 1.500V7z" fill="#2a7fc8"/></svg>
<div style="left:590px;top:574px;width:32px;height:2px;background:#a89ac8"></div>
<svg style="left:761px;top:557px" width="12" height="8" viewBox="0 0 12 8"><path d="M1 7l5-5 5 5" fill="none" stroke="#222" stroke-width="1.200"/></svg>
<div style="left:785px;top:553px;width:13px;height:15px;background:#fbe3e1;border:1px solid #c99;color:#d03030;font:bold 11px/13px 'Liberation Sans',sans-serif;text-align:center">V</div>
<div class="t" style="left:808px;top:554px;font-size:10px;color:#333">◁×</div>
<svg style="left:832px;top:554px" width="14" height="12" viewBox="0 0 14 12"><rect x="1" y="3" width="12" height="7" fill="#222"/><path d="M3 1h4" stroke="#222"/></svg>
<svg style="left:858px;top:554px" width="13" height="13" viewBox="0 0 13 13"><path d="M1 12a11 11 0 0 1 11-11M4 12a8 8 0 0 1 8-8M7 12a5 5 0 0 1 5-5" fill="none" stroke="#999"/></svg>
<svg style="left:883px;top:554px" width="13" height="13" viewBox="0 0 13 13"><path d="M2 11l3-3M5 5l3 3M8 2l3 3-5 5-3-3z" fill="none" stroke="#222" stroke-width="1.200"/></svg>
<div class="t" style="left:909px;top:554px;font-size:9.500px;color:#333">ENG</div>
<div class="t" style="left:938px;top:548px;width:40px;font-size:9px;color:#333;text-align:center">10:59 SA</div>
<div class="t" style="left:932px;top:561px;width:52px;font-size:9px;color:#333;text-align:center">02/09/2021</div>
<svg style="left:992px;top:553px" width="15" height="15" viewBox="0 0 15 15"><path d="M2 1h11v10H9l-1.500 2L6 11H2z" fill="#222"/><path d="M4 4h7M4 6h7M4 8h5" stroke="#eee" stroke-width=".8"/></svg>
<div style="left:1020px;top:546px;width:1px;height:30px;background:#ccc"></div>
</body></html>
